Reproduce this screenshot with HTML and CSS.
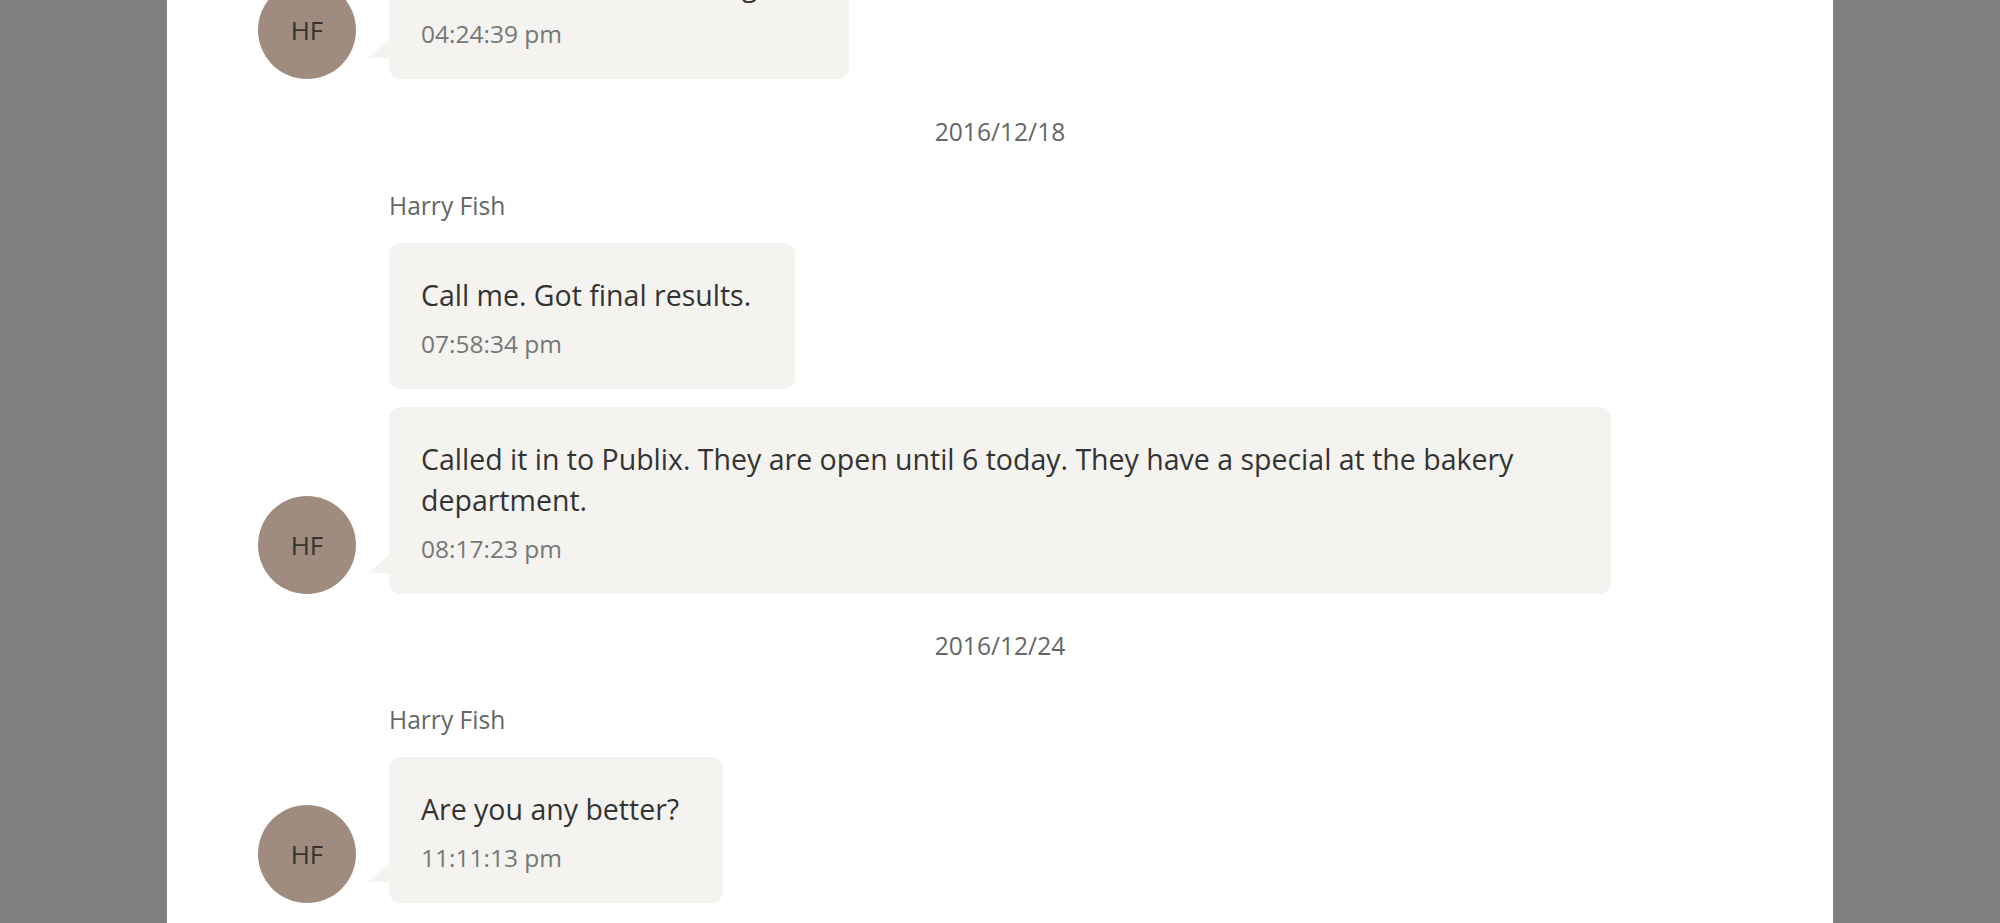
FILE: index.html
```html
<!DOCTYPE html>
<html lang="en">
<head>
<meta charset="utf-8">
<title>Conversation</title>
<link rel="stylesheet" href="styles.css">
</head>
<body>
<main class="panel">
  <div class="thread">
    <section class="day">
      <div class="date">2016/12/17</div>
      <div class="sender">Harry Fish</div>
      <div class="group">
        <div class="avatar">HF</div>
        <div class="bubbles">
          <div class="bubble last">
            <p class="text">Will talk to the doctors again.</p>
            <time class="stamp">04:24:39 pm</time>
          </div>
        </div>
      </div>
    </section>

    <section class="day">
      <div class="date">2016/12/18</div>
      <div class="sender">Harry Fish</div>
      <div class="group">
        <div class="avatar">HF</div>
        <div class="bubbles">
          <div class="bubble">
            <p class="text">Call me. Got final results.</p>
            <time class="stamp">07:58:34 pm</time>
          </div>
          <div class="bubble last">
            <p class="text">Called it in to Publix. They are open until 6 today. They have a special at the bakery department.</p>
            <time class="stamp">08:17:23 pm</time>
          </div>
        </div>
      </div>
    </section>

    <section class="day">
      <div class="date">2016/12/24</div>
      <div class="sender">Harry Fish</div>
      <div class="group">
        <div class="avatar">HF</div>
        <div class="bubbles">
          <div class="bubble last">
            <p class="text">Are you any better?</p>
            <time class="stamp">11:11:13 pm</time>
          </div>
        </div>
      </div>
    </section>
  </div>
</main>
</body>
</html>
```

FILE: styles.css
```css
html, body {
  margin: 0;
  padding: 0;
  height: 100%;
}

body {
  background: #808080;
  font-family: "Open Sans", "Noto Sans", sans-serif;
  color: #333333;
  overflow: hidden;
}

.panel {
  width: 1666px;
  height: 100vh;
  margin: 0 auto;
  background: #ffffff;
  display: flex;
  flex-direction: column;
  justify-content: flex-end;
  overflow: hidden;
}

.thread {
  padding: 0 91px 20px 91px;
  display: flex;
  flex-direction: column;
}

.day {
  display: flex;
  flex-direction: column;
}

.date {
  text-align: center;
  font-size: 24.6px;
  line-height: 35px;
  color: #666666;
  padding: 34.5px 0 39px;
}

.sender {
  font-size: 24.6px;
  line-height: 35px;
  color: #666666;
  margin: 0 0 20px 131px;
}

.group {
  display: flex;
  align-items: flex-end;
  gap: 33px;
}

.avatar {
  flex: 0 0 98px;
  width: 98px;
  height: 98px;
  border-radius: 50%;
  background: #a08c7e;
  color: #333333;
  font-size: 26px;
  display: flex;
  align-items: center;
  justify-content: center;
}

.bubbles {
  display: flex;
  flex-direction: column;
  align-items: flex-start;
  gap: 18px;
  min-width: 0;
}

.bubble {
  position: relative;
  max-width: 1222px;
  box-sizing: border-box;
  background: #f4f3f0;
  border-radius: 12px;
  padding: 32px 44px 28px 32px;
}

.bubble.last::before {
  content: "";
  position: absolute;
  left: -21px;
  bottom: 21px;
  width: 0;
  height: 0;
  border-left: 21px solid transparent;
  border-bottom: 18px solid #f4f3f0;
}

.text {
  margin: 0 0 10px;
  font-size: 28.5px;
  line-height: 41px;
  color: #333333;
}

.stamp {
  display: block;
  font-size: 24.5px;
  line-height: 35px;
  color: #777777;
}
```
